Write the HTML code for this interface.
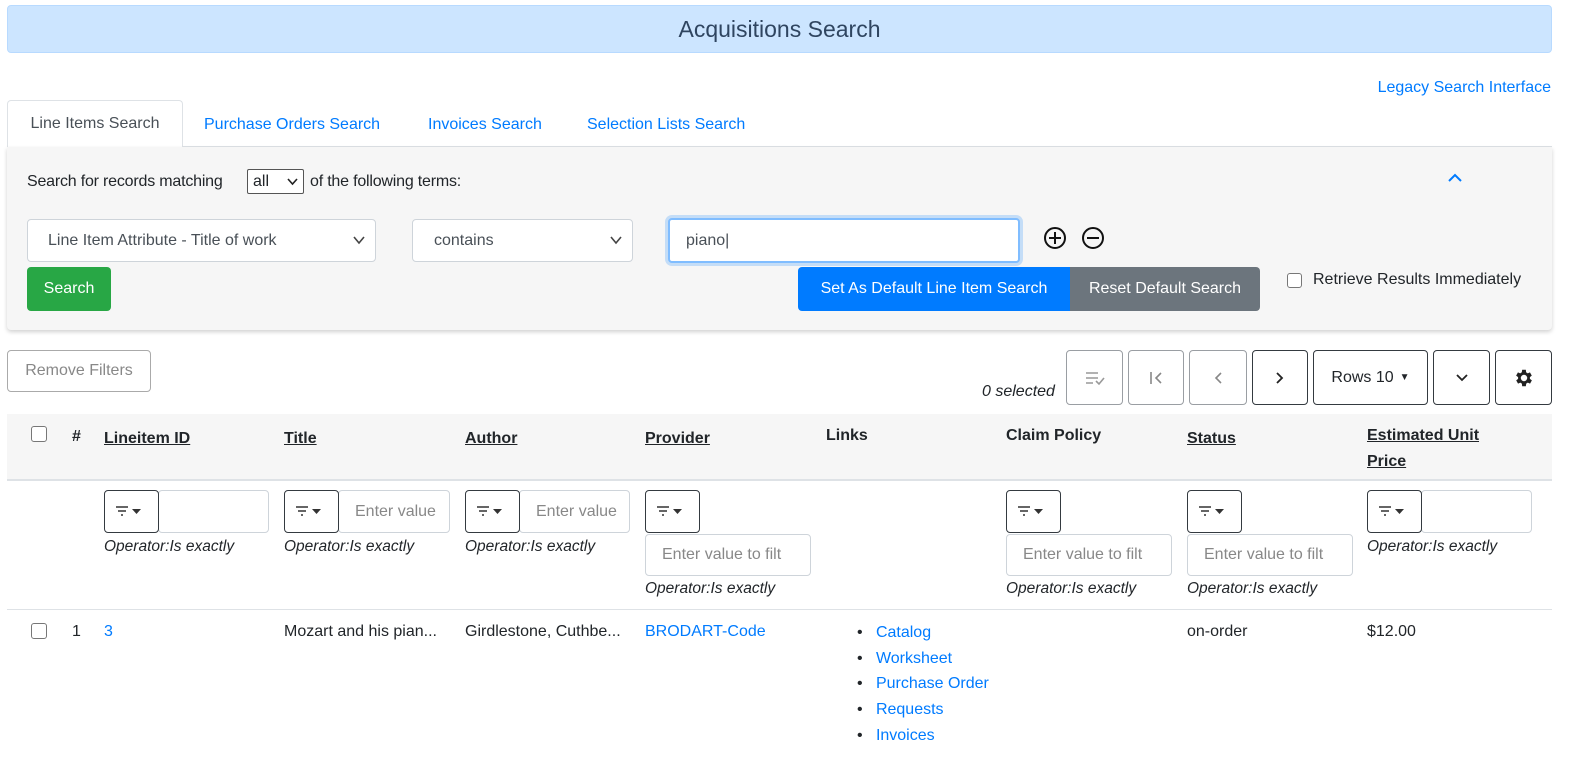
<!DOCTYPE html>
<html><head><meta charset="utf-8"><style>
*{box-sizing:border-box}
body{margin:0;width:1586px;height:768px;overflow:hidden;font-family:"Liberation Sans",sans-serif;font-size:16px;color:#212529;background:#fff;position:relative}
.a{position:absolute}
a,.lk{color:#007bff;text-decoration:none}
.box{position:absolute;border:1px solid #ced4da;border-radius:4px;background:#fff}
.btn{position:absolute;border-radius:4px;display:flex;align-items:center;justify-content:center}
.ob{border:1px solid #343a40;background:#fff}
.og{border:1px solid #9a9ea3;background:#fff}
.th{position:absolute;font-weight:bold;text-decoration:underline;top:430px}
.op{position:absolute;font-style:italic;font-size:15.5px}
.fb{position:absolute;width:55px;height:43px;border:1px solid #343a40;border-radius:4px;background:#fff}
.ph{color:#888}
.cb{position:absolute;width:16px;height:16px;border:1px solid #777;border-radius:3px;background:#fff}
.chev{position:absolute;right:10px;top:16px}
</style></head><body>
<div class="a" style="left:7px;top:5px;width:1545px;height:48px;background:#cce5ff;border:1px solid #b8daff;border-radius:4px;text-align:center;line-height:46px;font-size:23px;color:#2f4560">Acquisitions Search</div>
<a class="a" style="right:35px;top:79px">Legacy Search Interface</a>
<div class="a" style="left:7px;top:146px;width:1545px;height:1px;background:#dee2e6"></div>
<div class="a" style="left:7px;top:100px;width:176px;height:48px;background:#fff;border:1px solid #dee2e6;border-bottom:none;border-radius:4px 4px 0 0;line-height:46px;text-align:center;color:#495057">Line Items Search</div>
<a class="a" style="left:204px;top:116px">Purchase Orders Search</a>
<a class="a" style="left:428px;top:116px">Invoices Search</a>
<a class="a" style="left:587px;top:116px">Selection Lists Search</a>
<div class="a" style="left:7px;top:147px;width:1545px;height:183px;background:#f6f6f6;box-shadow:0 2px 4px rgba(0,0,0,.18);border-radius:0 0 4px 4px"></div>
<div class="a" style="left:27px;top:173px;letter-spacing:-0.2px">Search for records matching</div>
<div class="a" style="left:247px;top:169px;width:57px;height:25px;border:1px solid #555;border-radius:2px;background:#fff;padding-left:5px;line-height:23px">all <svg style="position:absolute;right:5px;top:8px" width="11" height="8"><path d="M1 1l4.5 5 4.5-5" stroke="#222" stroke-width="1.6" fill="none"/></svg></div>
<div class="a" style="left:310px;top:173px;letter-spacing:-0.2px">of the following terms:</div>
<svg class="a" style="left:1447px;top:172px" width="16" height="12"><path d="M2 9 L8 3 L14 9" stroke="#007bff" stroke-width="2" fill="none"/></svg>
<div class="box" style="left:27px;top:219px;width:349px;height:43px;padding:12px 20px;color:#495057">Line Item Attribute - Title of work<svg class="chev" width="12" height="9"><path d="M1 1l5 6 5-6" stroke="#444" stroke-width="1.6" fill="none"/></svg></div>
<div class="box" style="left:412px;top:219px;width:221px;height:43px;padding:12px 21px;color:#495057">contains<svg class="chev" width="12" height="9"><path d="M1 1l5 6 5-6" stroke="#444" stroke-width="1.6" fill="none"/></svg></div>
<div class="box" style="left:668px;top:218px;width:352px;height:45px;border:2px solid #80bdff;box-shadow:0 0 0 3px rgba(0,123,255,.2);padding:12px 16px;color:#495057">piano|</div>
<svg class="a" style="left:1043px;top:226px" width="24" height="24"><circle cx="12" cy="12" r="10" stroke="#111" stroke-width="2" fill="none"/><path d="M12 6v12M6 12h12" stroke="#111" stroke-width="2"/></svg>
<svg class="a" style="left:1081px;top:226px" width="24" height="24"><circle cx="12" cy="12" r="10" stroke="#111" stroke-width="2" fill="none"/><path d="M6 12h12" stroke="#111" stroke-width="2"/></svg>
<div class="btn" style="left:27px;top:267px;width:84px;height:44px;background:#28a745;color:#fff">Search</div>
<div class="btn" style="left:798px;top:267px;width:272px;height:44px;background:#007bff;color:#fff;border-radius:4px 0 0 4px">Set As Default Line Item Search</div>
<div class="btn" style="left:1070px;top:267px;width:190px;height:44px;background:#6c757d;color:#fff;border-radius:0 4px 4px 0">Reset Default Search</div>
<div class="cb" style="left:1287px;top:273px;width:15px;height:15px"></div>
<div class="a" style="left:1313px;top:271px">Retrieve Results Immediately</div>
<div class="btn og" style="left:7px;top:350px;width:144px;height:42px;color:#888;border-color:#aaa">Remove Filters</div>
<div class="a" style="left:982px;top:383px;font-style:italic">0 selected</div>
<div class="btn og" style="left:1066px;top:350px;width:57px;height:55px"><svg width="22" height="16"><path d="M2 3h12M2 8h12M2 13h7" stroke="#999" stroke-width="1.6"/><path d="M12 11l3 3 5-6" stroke="#999" stroke-width="1.6" fill="none"/></svg></div>
<div class="btn og" style="left:1128px;top:350px;width:56px;height:55px"><svg width="16" height="14"><path d="M3 1v12M13 2l-5 5 5 5" stroke="#888" stroke-width="1.6" fill="none"/></svg></div>
<div class="btn og" style="left:1189px;top:350px;width:58px;height:55px"><svg width="10" height="14"><path d="M8 2l-5 5 5 5" stroke="#888" stroke-width="1.6" fill="none"/></svg></div>
<div class="btn ob" style="left:1252px;top:350px;width:56px;height:55px"><svg width="10" height="14"><path d="M2 2l5 5-5 5" stroke="#222" stroke-width="1.8" fill="none"/></svg></div>
<div class="btn ob" style="left:1313px;top:350px;width:115px;height:55px">Rows 10 <span style="font-size:10px;margin-left:6px">&#9660;</span></div>
<div class="btn ob" style="left:1433px;top:350px;width:57px;height:55px"><svg width="14" height="10"><path d="M2 2l5 5 5-5" stroke="#222" stroke-width="1.8" fill="none"/></svg></div>
<div class="btn ob" style="left:1495px;top:350px;width:57px;height:55px"><svg width="22" height="22" viewBox="0 0 24 24"><path fill="#222" d="M19.4 13a7.5 7.5 0 000-2l2.1-1.6-2-3.5-2.5 1a7.6 7.6 0 00-1.7-1L15 3h-4l-.4 2.9a7.6 7.6 0 00-1.7 1l-2.5-1-2 3.5L6.6 11a7.5 7.5 0 000 2l-2.1 1.6 2 3.5 2.5-1a7.6 7.6 0 001.7 1L11 21h4l.4-2.9a7.6 7.6 0 001.7-1l2.5 1 2-3.5zM13 15.5a3.5 3.5 0 110-7 3.5 3.5 0 010 7z" transform="translate(-1 0)"/></svg></div>
<div class="a" style="left:7px;top:414px;width:1545px;height:67px;background:#f6f6f6;border-bottom:2px solid #dee2e6"></div>
<div class="cb" style="left:31px;top:426px"></div>
<div class="a" style="left:72px;top:428px;font-weight:bold">#</div>
<div class="th" style="left:104px">Lineitem ID</div>
<div class="th" style="left:284px">Title</div>
<div class="th" style="left:465px">Author</div>
<div class="th" style="left:645px">Provider</div>
<div class="a" style="left:826px;top:427px;font-weight:bold">Links</div>
<div class="a" style="left:1006px;top:427px;font-weight:bold">Claim Policy</div>
<div class="th" style="left:1187px">Status</div>
<div class="th" style="left:1367px;top:423px;line-height:26px">Estimated Unit<br>Price</div>
<div class="box" style="left:158px;top:490px;width:111px;height:43px"></div>
<div class="box ph" style="left:338px;top:490px;width:112px;height:43px;padding:12px 16px;overflow:hidden;white-space:nowrap">Enter value</div>
<div class="box ph" style="left:519px;top:490px;width:111px;height:43px;padding:12px 16px;overflow:hidden;white-space:nowrap">Enter value</div>
<div class="box" style="left:1421px;top:490px;width:111px;height:43px"></div>
<div class="box ph" style="left:645px;top:534px;width:166px;height:42px;padding:11px 16px;overflow:hidden;white-space:nowrap">Enter value to filt</div>
<div class="box ph" style="left:1006px;top:534px;width:166px;height:42px;padding:11px 16px;overflow:hidden;white-space:nowrap">Enter value to filt</div>
<div class="box ph" style="left:1187px;top:534px;width:166px;height:42px;padding:11px 16px;overflow:hidden;white-space:nowrap">Enter value to filt</div>
<div class="fb" style="left:104px;top:490px"></div>
<div class="fb" style="left:284px;top:490px"></div>
<div class="fb" style="left:465px;top:490px"></div>
<div class="fb" style="left:645px;top:490px"></div>
<div class="fb" style="left:1006px;top:490px"></div>
<div class="fb" style="left:1187px;top:490px"></div>
<div class="fb" style="left:1367px;top:490px"></div>
<svg class="a" style="left:0;top:0" width="1586" height="768">
<defs><g id="f"><path d="M12 17h12M14 21h8M17 25h2" stroke="#333" stroke-width="1.6"/><path d="M28 19h9l-4.5 5z" fill="#333"/></g></defs>
<use href="#f" x="104" y="490"/><use href="#f" x="284" y="490"/><use href="#f" x="465" y="490"/><use href="#f" x="645" y="490"/><use href="#f" x="1006" y="490"/><use href="#f" x="1187" y="490"/><use href="#f" x="1367" y="490"/>
</svg>
<div class="op" style="left:104px;top:538px">Operator:Is exactly</div>
<div class="op" style="left:284px;top:538px">Operator:Is exactly</div>
<div class="op" style="left:465px;top:538px">Operator:Is exactly</div>
<div class="op" style="left:645px;top:580px">Operator:Is exactly</div>
<div class="op" style="left:1006px;top:580px">Operator:Is exactly</div>
<div class="op" style="left:1187px;top:580px">Operator:Is exactly</div>
<div class="op" style="left:1367px;top:538px">Operator:Is exactly</div>
<div class="a" style="left:7px;top:609px;width:1545px;height:1px;background:#dee2e6"></div>
<div class="cb" style="left:31px;top:623px"></div>
<div class="a" style="left:72px;top:623px">1</div>
<a class="a" style="left:104px;top:623px">3</a>
<div class="a" style="left:284px;top:623px">Mozart and his pian...</div>
<div class="a" style="left:465px;top:623px">Girdlestone, Cuthbe...</div>
<a class="a" style="left:645px;top:623px">BRODART-Code</a>
<div class="a" style="left:857px;top:620px;line-height:25.7px">
<div>&bull;&nbsp;&nbsp;&nbsp;<span class="lk">Catalog</span></div>
<div>&bull;&nbsp;&nbsp;&nbsp;<span class="lk">Worksheet</span></div>
<div>&bull;&nbsp;&nbsp;&nbsp;<span class="lk">Purchase Order</span></div>
<div>&bull;&nbsp;&nbsp;&nbsp;<span class="lk">Requests</span></div>
<div>&bull;&nbsp;&nbsp;&nbsp;<span class="lk">Invoices</span></div>
</div>
<div class="a" style="left:1187px;top:623px">on-order</div>
<div class="a" style="left:1367px;top:623px">$12.00</div>
</body></html>
